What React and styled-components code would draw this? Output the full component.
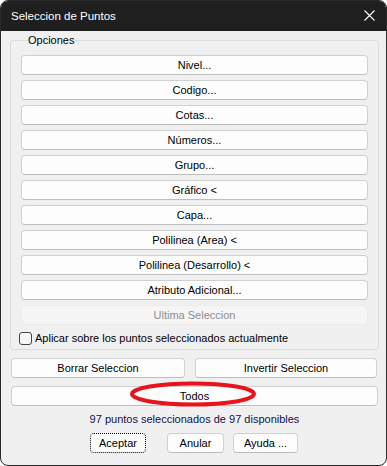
import React from 'react';
import styled, { createGlobalStyle } from 'styled-components';

const GlobalStyle = createGlobalStyle`
  html, body {
    margin: 0;
    padding: 0;
    background: #fff;
  }
  * { box-sizing: border-box; }
`;

/* Window frame
   ========================================================================== */
const Window = styled.div`
  width: 387px;
  height: 466px;
  display: flex;
  flex-direction: column;
  border: 1px solid #2a2a2a;
  border-radius: 8px;
  overflow: hidden;
  background: #f0f0f0;
  font-family: "Liberation Sans", Arial, sans-serif;
  font-size: 11px;
  color: #000;
`;

const TitleBar = styled.div`
  height: 30px;
  flex: none;
  background: #1f1f1f;
  display: flex;
  align-items: center;
  justify-content: space-between;
  padding: 0 11px 1px 10px;
  color: #fff;
  font-size: 11.5px;
`;

const Body = styled.div`
  flex: 1;
  display: flex;
  flex-direction: column;
  padding: 3px 7px 0 9px;
`;

/* Group box
   ========================================================================== */
const GroupBox = styled.fieldset`
  margin: 0;
  padding: 8px 10px 4px 10px;
  border: 1px solid #dcdcdc;
  border-radius: 3px;
  display: flex;
  flex-direction: column;
  gap: 5px;
`;

const Legend = styled.legend`
  padding: 0 1px;
  margin-left: 6px;
  font-size: 11px;
  line-height: 13px;
`;

/* Buttons
   ========================================================================== */
const Button = styled.button`
  height: 20px;
  width: ${p => p.$w ? `${p.$w}px` : '100%'};
  flex: ${p => p.$grow ? '1' : 'none'};
  padding: 0;
  font-family: inherit;
  font-size: 11px;
  color: ${p => p.disabled ? '#8d8d8d' : '#000'};
  background: ${p => p.disabled ? '#f5f5f5' : '#fdfdfd'};
  border: 1px ${p => p.$focus ? 'dotted #000' : 'solid #d0d0d0'};
  border-bottom-color: ${p => p.$focus ? '#000' : p.disabled ? '#ececec' : '#bdbdbd'};
  ${p => p.disabled && 'border-color: #ececec;'}
  border-radius: 4px;
`;

const CheckRow = styled.label`
  display: flex;
  align-items: center;
  gap: 3px;
  height: 14px;
  margin: 1px 0 0 -2px;
`;

const Box = styled.span`
  width: 13px;
  height: 13px;
  border: 1px solid #444;
  border-radius: 3px;
  background: #f6f6f6;
`;

const Row = styled.div`
  display: flex;
  gap: 10px;
  margin: 8px 0 0;
  padding: 0 1px;
`;

const TodosWrap = styled.div`
  position: relative;
  display: flex;
  margin: 8px 1px 0 1px;
`;

const Ring = styled.svg`
  position: absolute;
  left: 118px;
  top: -6px;
  pointer-events: none;
`;

const Status = styled.div`
  margin-top: 7px;
  text-align: center;
  color: #10104a;
  font-size: 11px;
  line-height: 13px;
`;

const Footer = styled.div`
  display: flex;
  margin: 7px 0 0 80px;
  gap: 21px;
  & > button + button + button { margin-left: -12px; }
`;

const options = [
  'Nivel...', 'Codigo...', 'Cotas...', 'Números...', 'Grupo...', 'Gráfico <',
  'Capa...', 'Polilinea (Area) <', 'Polilinea (Desarrollo) <', 'Atributo Adicional...',
];

export default function App() {
  return (
    <>
      <GlobalStyle />
      <Window>
        <TitleBar>
          <span>Seleccion de Puntos</span>
          <svg width="11" height="11" viewBox="0 0 11 11">
            <path d="M0.5 0.5 L10.5 10.5 M10.5 0.5 L0.5 10.5" stroke="#fff" strokeWidth="1.1" />
          </svg>
        </TitleBar>
        <Body>
          <GroupBox>
            <Legend>Opciones</Legend>
            {options.map(o => <Button key={o}>{o}</Button>)}
            <Button disabled>Ultima Seleccion</Button>
            <CheckRow>
              <Box />
              Aplicar sobre los puntos seleccionados actualmente
            </CheckRow>
          </GroupBox>
          <Row>
            <Button $w={174}>Borrar Seleccion</Button>
            <Button $w={182}>Invertir Seleccion</Button>
          </Row>
          <TodosWrap>
            <Button $grow>Todos</Button>
            <Ring width="130" height="30" viewBox="0 0 130 30">
              <ellipse cx="64" cy="14" rx="61" ry="10.5" fill="none" stroke="#e8141c" strokeWidth="4" />
            </Ring>
          </TodosWrap>
          <Status>97 puntos seleccionados de 97 disponibles</Status>
          <Footer>
            <Button $w={56} $focus>Aceptar</Button>
            <Button $w={57}>Anular</Button>
            <Button $w={65}>Ayuda ...</Button>
          </Footer>
        </Body>
      </Window>
    </>
  );
}
